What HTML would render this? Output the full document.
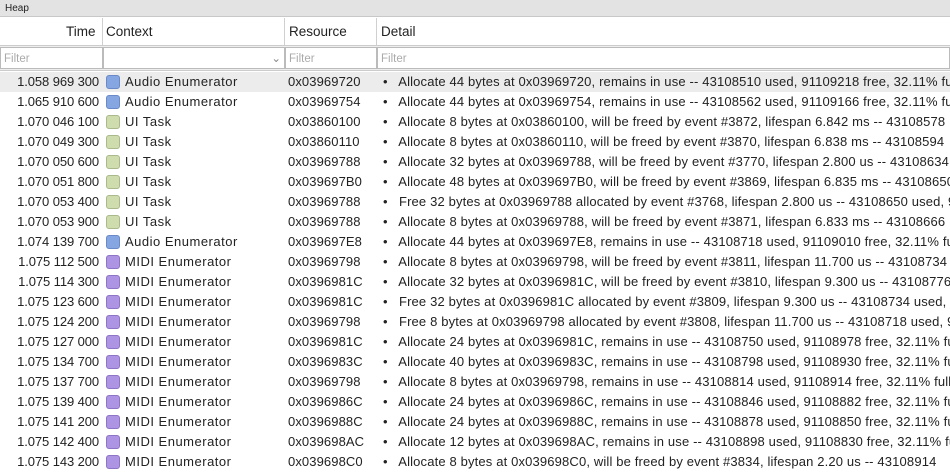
<!DOCTYPE html>
<html><head><style>
body{margin:0;width:950px;height:475px;overflow:hidden;background:#fff;font-family:"Liberation Sans",sans-serif;font-size:13px;color:#222;position:relative}
.title{position:absolute;left:0;top:0;width:950px;height:17px;background:#e3e3e3;border-bottom:1px solid #c8c8c8;font-size:10px;line-height:17px;padding-left:5px;box-sizing:border-box}
.hdr{position:absolute;top:18px;height:27px;line-height:28px;font-size:13.5px;color:#222}
.vl{position:absolute;width:1px;background:#d0d0d0}
.flt{position:absolute;top:47px;height:22px;line-height:22px;font-size:11.5px;color:#aaa;box-sizing:border-box;border:1px solid #bbb;background:#fff;padding-left:3px}
.row{position:absolute;left:0;width:950px;height:20px;line-height:20px;white-space:nowrap}
.t{position:absolute;right:851px;text-align:right;letter-spacing:-0.1px}
.ic{position:absolute;left:106px;top:3px;width:12px;height:12px;border-radius:3px;border:1px solid}
.c{position:absolute;left:125px;letter-spacing:0.5px}
.r{position:absolute;left:288px;letter-spacing:0.1px}
.d{position:absolute;left:383px;width:567px;overflow:hidden;letter-spacing:0.15px}
.a{background:#86a6e2;border-color:#6a89c8}
.u{background:#cfdcae;border-color:#a9b98a}
.m{background:#ad95e3;border-color:#8d74c6}
</style></head><body>
<div class="title">Heap</div>
<div class="hdr" style="left:66px">Time</div>
<div class="hdr" style="left:106px">Context</div>
<div class="hdr" style="left:289px">Resource</div>
<div class="hdr" style="left:381px">Detail</div>
<div class="vl" style="left:102px;top:18px;height:28px"></div>
<div class="vl" style="left:284px;top:18px;height:28px"></div>
<div class="vl" style="left:376px;top:18px;height:28px"></div>
<div style="position:absolute;left:0;top:45px;width:950px;height:26px;background:#eee;border-top:1px solid #ccc;border-bottom:1px solid #ccc;box-sizing:border-box"></div>
<div class="flt" style="left:0;width:103px">Filter</div>
<div class="flt" style="left:103px;width:182px;color:#888;text-align:right;padding-right:3px">⌄</div>
<div class="flt" style="left:285px;width:92px">Filter</div>
<div class="flt" style="left:377px;width:573px">Filter</div>
<div class="row" style="top:72px;background:#ececec"><span class="t">1.058 969 300</span><i class="ic a"></i><span class="c">Audio Enumerator</span><span class="r">0x03969720</span><span class="d">•&nbsp;&nbsp; Allocate 44 bytes at 0x03969720, remains in use -- 43108510 used, 91109218 free, 32.11% full</span></div>
<div class="row" style="top:92px"><span class="t">1.065 910 600</span><i class="ic a"></i><span class="c">Audio Enumerator</span><span class="r">0x03969754</span><span class="d">•&nbsp;&nbsp; Allocate 44 bytes at 0x03969754, remains in use -- 43108562 used, 91109166 free, 32.11% full</span></div>
<div class="row" style="top:112px"><span class="t">1.070 046 100</span><i class="ic u"></i><span class="c">UI Task</span><span class="r">0x03860100</span><span class="d">•&nbsp;&nbsp; Allocate 8 bytes at 0x03860100, will be freed by event #3872, lifespan 6.842 ms -- 43108578</span></div>
<div class="row" style="top:132px"><span class="t">1.070 049 300</span><i class="ic u"></i><span class="c">UI Task</span><span class="r">0x03860110</span><span class="d">•&nbsp;&nbsp; Allocate 8 bytes at 0x03860110, will be freed by event #3870, lifespan 6.838 ms -- 43108594</span></div>
<div class="row" style="top:152px"><span class="t">1.070 050 600</span><i class="ic u"></i><span class="c">UI Task</span><span class="r">0x03969788</span><span class="d">•&nbsp;&nbsp; Allocate 32 bytes at 0x03969788, will be freed by event #3770, lifespan 2.800 us -- 43108634</span></div>
<div class="row" style="top:172px"><span class="t">1.070 051 800</span><i class="ic u"></i><span class="c">UI Task</span><span class="r">0x039697B0</span><span class="d">•&nbsp;&nbsp; Allocate 48 bytes at 0x039697B0, will be freed by event #3869, lifespan 6.835 ms -- 43108650</span></div>
<div class="row" style="top:192px"><span class="t">1.070 053 400</span><i class="ic u"></i><span class="c">UI Task</span><span class="r">0x03969788</span><span class="d">•&nbsp;&nbsp; Free 32 bytes at 0x03969788 allocated by event #3768, lifespan 2.800 us -- 43108650 used, 9</span></div>
<div class="row" style="top:212px"><span class="t">1.070 053 900</span><i class="ic u"></i><span class="c">UI Task</span><span class="r">0x03969788</span><span class="d">•&nbsp;&nbsp; Allocate 8 bytes at 0x03969788, will be freed by event #3871, lifespan 6.833 ms -- 43108666</span></div>
<div class="row" style="top:232px"><span class="t">1.074 139 700</span><i class="ic a"></i><span class="c">Audio Enumerator</span><span class="r">0x039697E8</span><span class="d">•&nbsp;&nbsp; Allocate 44 bytes at 0x039697E8, remains in use -- 43108718 used, 91109010 free, 32.11% full</span></div>
<div class="row" style="top:252px"><span class="t">1.075 112 500</span><i class="ic m"></i><span class="c">MIDI Enumerator</span><span class="r">0x03969798</span><span class="d">•&nbsp;&nbsp; Allocate 8 bytes at 0x03969798, will be freed by event #3811, lifespan 11.700 us -- 43108734</span></div>
<div class="row" style="top:272px"><span class="t">1.075 114 300</span><i class="ic m"></i><span class="c">MIDI Enumerator</span><span class="r">0x0396981C</span><span class="d">•&nbsp;&nbsp; Allocate 32 bytes at 0x0396981C, will be freed by event #3810, lifespan 9.300 us -- 43108776</span></div>
<div class="row" style="top:292px"><span class="t">1.075 123 600</span><i class="ic m"></i><span class="c">MIDI Enumerator</span><span class="r">0x0396981C</span><span class="d">•&nbsp;&nbsp; Free 32 bytes at 0x0396981C allocated by event #3809, lifespan 9.300 us -- 43108734 used, 9</span></div>
<div class="row" style="top:312px"><span class="t">1.075 124 200</span><i class="ic m"></i><span class="c">MIDI Enumerator</span><span class="r">0x03969798</span><span class="d">•&nbsp;&nbsp; Free 8 bytes at 0x03969798 allocated by event #3808, lifespan 11.700 us -- 43108718 used, 9</span></div>
<div class="row" style="top:332px"><span class="t">1.075 127 000</span><i class="ic m"></i><span class="c">MIDI Enumerator</span><span class="r">0x0396981C</span><span class="d">•&nbsp;&nbsp; Allocate 24 bytes at 0x0396981C, remains in use -- 43108750 used, 91108978 free, 32.11% full</span></div>
<div class="row" style="top:352px"><span class="t">1.075 134 700</span><i class="ic m"></i><span class="c">MIDI Enumerator</span><span class="r">0x0396983C</span><span class="d">•&nbsp;&nbsp; Allocate 40 bytes at 0x0396983C, remains in use -- 43108798 used, 91108930 free, 32.11% full</span></div>
<div class="row" style="top:372px"><span class="t">1.075 137 700</span><i class="ic m"></i><span class="c">MIDI Enumerator</span><span class="r">0x03969798</span><span class="d">•&nbsp;&nbsp; Allocate 8 bytes at 0x03969798, remains in use -- 43108814 used, 91108914 free, 32.11% full</span></div>
<div class="row" style="top:392px"><span class="t">1.075 139 400</span><i class="ic m"></i><span class="c">MIDI Enumerator</span><span class="r">0x0396986C</span><span class="d">•&nbsp;&nbsp; Allocate 24 bytes at 0x0396986C, remains in use -- 43108846 used, 91108882 free, 32.11% full</span></div>
<div class="row" style="top:412px"><span class="t">1.075 141 200</span><i class="ic m"></i><span class="c">MIDI Enumerator</span><span class="r">0x0396988C</span><span class="d">•&nbsp;&nbsp; Allocate 24 bytes at 0x0396988C, remains in use -- 43108878 used, 91108850 free, 32.11% full</span></div>
<div class="row" style="top:432px"><span class="t">1.075 142 400</span><i class="ic m"></i><span class="c">MIDI Enumerator</span><span class="r">0x039698AC</span><span class="d">•&nbsp;&nbsp; Allocate 12 bytes at 0x039698AC, remains in use -- 43108898 used, 91108830 free, 32.11% full</span></div>
<div class="row" style="top:452px"><span class="t">1.075 143 200</span><i class="ic m"></i><span class="c">MIDI Enumerator</span><span class="r">0x039698C0</span><span class="d">•&nbsp;&nbsp; Allocate 8 bytes at 0x039698C0, will be freed by event #3834, lifespan 2.20 us -- 43108914</span></div>
</body></html>
